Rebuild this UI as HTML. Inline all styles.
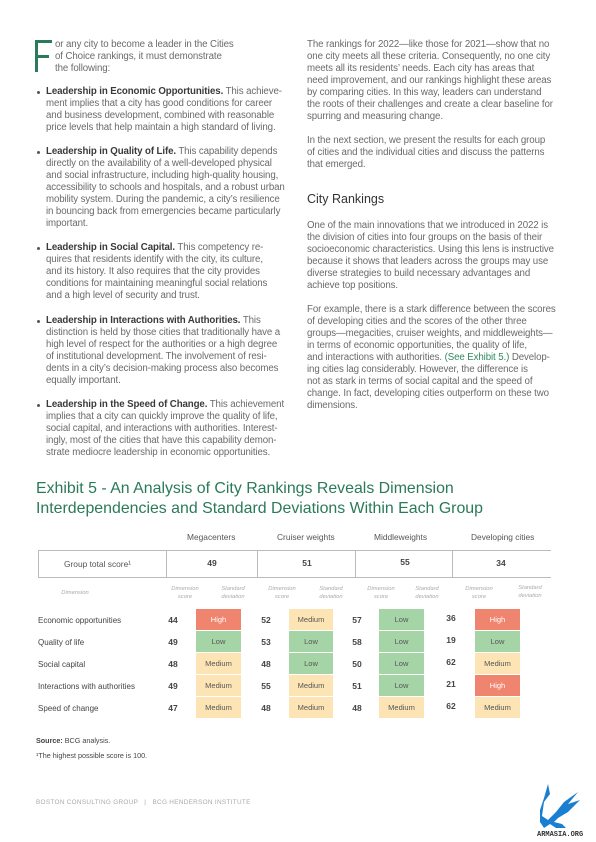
<!DOCTYPE html>
<html><head><meta charset="utf-8"><style>
body{margin:0;width:596px;height:842px;background:#fff;position:relative;overflow:hidden;font-family:"Liberation Sans",sans-serif;color:#6a6a6a;}
.b{position:absolute;font-size:9.7px;line-height:12px;white-space:nowrap;letter-spacing:-0.1px}
.b b{color:#3a3a3a}
.dot{position:absolute;width:3px;height:3px;border-radius:50%;background:#555}
.g{color:#2e8a5d}
.t{position:absolute;font-size:8px;color:#444;white-space:nowrap}
.c{position:absolute;font-size:7.5px;color:#555;text-align:center;line-height:21px;height:21px}
.n{position:absolute;font-size:8.5px;color:#444;font-weight:bold;width:30px;text-align:center}
.sh{position:absolute;font-size:5.8px;color:#aaa;font-style:italic;text-align:center;line-height:8px;width:44px}
.H{background:#f0856f;color:#fff}.M{background:#fde4b5}.L{background:#a5d5a6}
</style></head><body>
<div style="position:absolute;left:35px;top:40px;width:3px;height:32px;background:#2b7a5a"></div>
<div style="position:absolute;left:35px;top:40px;width:17px;height:3px;background:#2b7a5a"></div>
<div style="position:absolute;left:35px;top:55px;width:14px;height:3px;background:#2b7a5a"></div>
<div class="b" style="left:55px;top:39px">or any city to become a leader in the Cities<br>of Choice rankings, it must demonstrate<br>the following:</div>

<div class="dot" style="left:37px;top:91px"></div>
<div class="b" style="left:46px;top:86px"><b>Leadership in Economic Opportunities.</b> This achieve-<br>ment implies that a city has good conditions for career<br>and business development, combined with reasonable<br>price levels that help maintain a high standard of living.</div>
<div class="dot" style="left:37px;top:151px"></div>
<div class="b" style="left:46px;top:146px"><b>Leadership in Quality of Life.</b> This capability depends<br>directly on the availability of a well-developed physical<br>and social infrastructure, including high-quality housing,<br>accessibility to schools and hospitals, and a robust urban<br>mobility system. During the pandemic, a city’s resilience<br>in bouncing back from emergencies became particularly<br>important.</div>
<div class="dot" style="left:37px;top:247px"></div>
<div class="b" style="left:46px;top:242px"><b>Leadership in Social Capital.</b> This competency re-<br>quires that residents identify with the city, its culture,<br>and its history. It also requires that the city provides<br>conditions for maintaining meaningful social relations<br>and a high level of security and trust.</div>
<div class="dot" style="left:37px;top:320px"></div>
<div class="b" style="left:46px;top:315px"><b>Leadership in Interactions with Authorities.</b> This<br>distinction is held by those cities that traditionally have a<br>high level of respect for the authorities or a high degree<br>of institutional development. The involvement of resi-<br>dents in a city’s decision-making process also becomes<br>equally important.</div>
<div class="dot" style="left:37px;top:404px"></div>
<div class="b" style="left:46px;top:399px"><b>Leadership in the Speed of Change.</b> This achievement<br>implies that a city can quickly improve the quality of life,<br>social capital, and interactions with authorities. Interest-<br>ingly, most of the cities that have this capability demon-<br>strate mediocre leadership in economic opportunities.</div>

<div class="b" style="left:307px;top:39px">The rankings for 2022—like those for 2021—show that no<br>one city meets all these criteria. Consequently, no one city<br>meets all its residents’ needs. Each city has areas that<br>need improvement, and our rankings highlight these areas<br>by comparing cities. In this way, leaders can understand<br>the roots of their challenges and create a clear baseline for<br>spurring and measuring change.</div>
<div class="b" style="left:307px;top:135px">In the next section, we present the results for each group<br>of cities and the individual cities and discuss the patterns<br>that emerged.</div>
<div style="position:absolute;left:307px;top:192px;font-size:12.5px;color:#333">City Rankings</div>
<div class="b" style="left:307px;top:220px">One of the main innovations that we introduced in 2022 is<br>the division of cities into four groups on the basis of their<br>socioeconomic characteristics. Using this lens is instructive<br>because it shows that leaders across the groups may use<br>diverse strategies to build necessary advantages and<br>achieve top positions.</div>
<div class="b" style="left:307px;top:304px">For example, there is a stark difference between the scores<br>of developing cities and the scores of the other three<br>groups—megacities, cruiser weights, and middleweights—<br>in terms of economic opportunities, the quality of life,<br>and interactions with authorities. <span class="g">(See Exhibit 5.)</span> Develop-<br>ing cities lag considerably. However, the difference is<br>not as stark in terms of social capital and the speed of<br>change. In fact, developing cities outperform on these two<br>dimensions.</div>

<div style="position:absolute;left:36px;top:479px;font-size:15.9px;line-height:19.5px;color:#2b7a5a;white-space:nowrap">Exhibit 5 - An Analysis of City Rankings Reveals Dimension<br>Interdependencies and Standard Deviations Within Each Group</div>

<div class="t" style="left:187px;top:532px;color:#555;font-size:8.4px">Megacenters</div>
<div class="t" style="left:277px;top:532px;color:#555;font-size:8.4px">Cruiser weights</div>
<div class="t" style="left:374px;top:532px;color:#555;font-size:8.4px">Middleweights</div>
<div class="t" style="left:471px;top:532px;color:#555;font-size:8.4px">Developing cities</div>

<div style="position:absolute;left:38px;top:550px;width:512px;height:26px;border:1px solid #bbb;border-right:none"></div>
<div style="position:absolute;left:166px;top:550px;width:1px;height:28px;background:#bbb"></div>
<div style="position:absolute;left:257px;top:550px;width:1px;height:28px;background:#bbb"></div>
<div style="position:absolute;left:355px;top:550px;width:1px;height:28px;background:#bbb"></div>
<div style="position:absolute;left:452px;top:550px;width:1px;height:28px;background:#bbb"></div>
<div class="t" style="left:64px;top:559px;color:#555;font-size:8.4px">Group total score¹</div>
<div class="n" style="left:197px;top:558px">49</div>
<div class="n" style="left:292px;top:558px">51</div>
<div class="n" style="left:390px;top:557px">55</div>
<div class="n" style="left:486px;top:558px">34</div>

<div class="sh" style="left:53px;top:589px">Dimension</div>
<div class="sh" style="left:163px;top:585px">Dimension<br>score</div>
<div class="sh" style="left:211px;top:585px">Standard<br>deviation</div>
<div class="sh" style="left:260px;top:585px">Dimension<br>score</div>
<div class="sh" style="left:309px;top:585px">Standard<br>deviation</div>
<div class="sh" style="left:359px;top:585px">Dimension<br>score</div>
<div class="sh" style="left:405px;top:585px">Standard<br>deviation</div>
<div class="sh" style="left:457px;top:585px">Dimension<br>score</div>
<div class="sh" style="left:508px;top:584px">Standard<br>deviation</div>

<div class="t" style="left:38px;top:616px">Economic opportunities</div>
<div class="t" style="left:38px;top:638px">Quality of life</div>
<div class="t" style="left:38px;top:660px">Social capital</div>
<div class="t" style="left:38px;top:682px">Interactions with authorities</div>
<div class="t" style="left:38px;top:704px">Speed of change</div>

<div class="n" style="left:158px;top:615px">44</div><div class="c H" style="left:196px;top:609px;width:45px">High</div>
<div class="n" style="left:251px;top:615px">52</div><div class="c M" style="left:289px;top:609px;width:44px">Medium</div>
<div class="n" style="left:342px;top:615px">57</div><div class="c L" style="left:379px;top:609px;width:45px">Low</div>
<div class="n" style="left:436px;top:613px">36</div><div class="c H" style="left:475px;top:609px;width:45px">High</div>

<div class="n" style="left:158px;top:637px">49</div><div class="c L" style="left:196px;top:631px;width:45px">Low</div>
<div class="n" style="left:251px;top:637px">53</div><div class="c L" style="left:289px;top:631px;width:44px">Low</div>
<div class="n" style="left:342px;top:637px">58</div><div class="c L" style="left:379px;top:631px;width:45px">Low</div>
<div class="n" style="left:436px;top:635px">19</div><div class="c L" style="left:475px;top:631px;width:45px">Low</div>

<div class="n" style="left:158px;top:659px">48</div><div class="c M" style="left:196px;top:653px;width:45px">Medium</div>
<div class="n" style="left:251px;top:659px">48</div><div class="c L" style="left:289px;top:653px;width:44px">Low</div>
<div class="n" style="left:342px;top:659px">50</div><div class="c L" style="left:379px;top:653px;width:45px">Low</div>
<div class="n" style="left:436px;top:657px">62</div><div class="c M" style="left:475px;top:653px;width:45px">Medium</div>

<div class="n" style="left:158px;top:681px">49</div><div class="c M" style="left:196px;top:675px;width:45px">Medium</div>
<div class="n" style="left:251px;top:681px">55</div><div class="c M" style="left:289px;top:675px;width:44px">Medium</div>
<div class="n" style="left:342px;top:681px">51</div><div class="c L" style="left:379px;top:675px;width:45px">Low</div>
<div class="n" style="left:436px;top:679px">21</div><div class="c H" style="left:475px;top:675px;width:45px">High</div>

<div class="n" style="left:158px;top:703px">47</div><div class="c M" style="left:196px;top:697px;width:45px">Medium</div>
<div class="n" style="left:251px;top:703px">48</div><div class="c M" style="left:289px;top:697px;width:44px">Medium</div>
<div class="n" style="left:342px;top:703px">48</div><div class="c M" style="left:379px;top:697px;width:45px">Medium</div>
<div class="n" style="left:436px;top:701px">62</div><div class="c M" style="left:475px;top:697px;width:45px">Medium</div>

<div class="t" style="left:36px;top:736px;font-size:7.2px"><b>Source:</b> BCG analysis.</div>
<div class="t" style="left:36px;top:751px;font-size:7.2px">¹The highest possible score is 100.</div>

<div class="t" style="left:36px;top:799px;font-size:6.4px;color:#aaa;letter-spacing:0.3px">BOSTON CONSULTING GROUP &nbsp;&nbsp;|&nbsp;&nbsp; BCG HENDERSON INSTITUTE</div>

<svg style="position:absolute;left:534px;top:782px" width="62" height="56" viewBox="0 0 62 56">
<path d="M14 2 L16 12 L10 20 L8 34 L14 38 L22 30 L30 20 L44 10 L34 22 L46 18 L34 30 L24 36 L20 40 L28 42 L32 46 L22 46 L16 42 L10 46 L6 40 L6 28 L10 16 Z" fill="#1a7fd0"/>
<text x="3" y="54" font-family="Liberation Mono,monospace" font-size="7" font-weight="bold" fill="#333">ARMASIA.ORG</text>
</svg>
</body></html>
